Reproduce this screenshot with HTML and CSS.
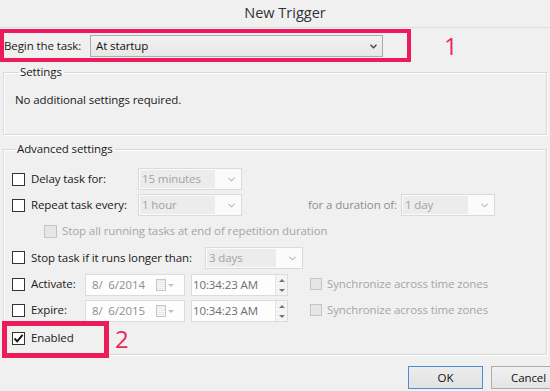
FILE: index.html
```html
<!DOCTYPE html>
<html>
<head>
    <meta charset="UTF-8">
    <title>New Trigger</title>
    <link rel="stylesheet" href="styles.css">
</head>
<body>
<div class="dialog">
    <div class="titlebar">New Trigger</div>

    <div class="begin-row">
        <div class="mark begin">
            <span class="begin-label">Begin the task:</span>
            <span class="combo main w293">
                <span class="combo-text">At startup</span>
                <svg class="chev" width="7" height="5" viewBox="0 0 7 5"><polyline points="0.5,0.8 3.5,3.8 6.5,0.8" fill="none" stroke="#444" stroke-width="1.3"/></svg>
            </span>
        </div>
        <span class="mark-num">1</span>
    </div>

    <!--设置区域-->
    <fieldset class="group settings">
        <legend>Settings</legend>
        <p class="note">No additional settings required.</p>
    </fieldset>

    <!--高级设置-->
    <fieldset class="group advanced">
        <legend>Advanced settings</legend>

        <div class="row">
            <label class="check w126"><span class="box"></span>Delay task for:</label>
            <span class="combo dis w104">
                <span class="combo-text">15 minutes</span>
                <svg class="chev" width="7" height="5" viewBox="0 0 7 5"><polyline points="0.5,0.8 3.5,3.8 6.5,0.8" fill="none" stroke="#b8b8b8" stroke-width="1.1"/></svg>
            </span>
        </div>

        <div class="row">
            <label class="check w126"><span class="box"></span>Repeat task every:</label>
            <span class="combo dis w104">
                <span class="combo-text">1 hour</span>
                <svg class="chev" width="7" height="5" viewBox="0 0 7 5"><polyline points="0.5,0.8 3.5,3.8 6.5,0.8" fill="none" stroke="#b8b8b8" stroke-width="1.1"/></svg>
            </span>
            <span class="duration-label">for a duration of:</span>
            <span class="combo dis w94">
                <span class="combo-text">1 day</span>
                <svg class="chev" width="7" height="5" viewBox="0 0 7 5"><polyline points="0.5,0.8 3.5,3.8 6.5,0.8" fill="none" stroke="#b8b8b8" stroke-width="1.1"/></svg>
            </span>
        </div>

        <div class="row sub">
            <label class="check disabled"><span class="box"></span>Stop all running tasks at end of repetition duration</label>
        </div>

        <div class="row tall">
            <label class="check w193"><span class="box"></span>Stop task if it runs longer than:</label>
            <span class="combo dis w98">
                <span class="combo-text">3 days</span>
                <svg class="chev" width="7" height="5" viewBox="0 0 7 5"><polyline points="0.5,0.8 3.5,3.8 6.5,0.8" fill="none" stroke="#b8b8b8" stroke-width="1.1"/></svg>
            </span>
        </div>

        <div class="row">
            <label class="check w73"><span class="box"></span>Activate:</label>
            <span class="date">
                <span class="date-text">8/&nbsp; 6/2014</span>
                <span class="cal"><span class="cal-page"></span><span class="cal-arrow"></span></span>
            </span>
            <span class="time">
                <span class="time-text">10:34:23 AM</span>
                <span class="spin"><span class="up"></span><span class="down"></span></span>
            </span>
            <label class="check disabled sync"><span class="box"></span>Synchronize across time zones</label>
        </div>

        <div class="row">
            <label class="check w73"><span class="box"></span>Expire:</label>
            <span class="date">
                <span class="date-text">8/&nbsp; 6/2015</span>
                <span class="cal"><span class="cal-page"></span><span class="cal-arrow"></span></span>
            </span>
            <span class="time">
                <span class="time-text">10:34:23 AM</span>
                <span class="spin"><span class="up"></span><span class="down"></span></span>
            </span>
            <label class="check disabled sync"><span class="box"></span>Synchronize across time zones</label>
        </div>

        <div class="row enabled-row">
            <div class="mark enabled">
                <label class="check"><span class="box on">
                    <svg width="11" height="11" viewBox="0 0 11 11"><polyline points="1.5,5.5 4.2,8.4 9.6,1.8" fill="none" stroke="#111" stroke-width="1.9"/></svg>
                </span>Enabled</label>
            </div>
            <span class="mark-num">2</span>
        </div>
    </fieldset>

    <div class="buttons">
        <a href="javascript:;" class="btn btn-ok">OK</a>
        <a href="javascript:;" class="btn">Cancel</a>
    </div>
</div>
</body>
</html>
```

FILE: styles.css
```css
body, div, p, fieldset, legend, span, label, a {
    margin: 0;
    padding: 0;
}

html, body {
    height: 100%;
}

body {
    background: #f0f0f0;
    overflow: hidden;
    font: 11.5px/16px "Open Sans", "Noto Sans", sans-serif;
    letter-spacing: -0.1px;
    color: #1a1a1a;
}

.dialog {
    width: 550px;
    height: 391px;
    overflow: hidden;
}

/*标题栏*/
.titlebar {
    height: 27px;
    padding-left: 20px;
    line-height: 26px;
    text-align: center;
    font-size: 14.5px;
    letter-spacing: 0;
    color: #333;
    border-bottom: 1px solid #dedede;
}

/*红色标注框*/
.mark {
    display: flex;
    align-items: center;
    box-sizing: border-box;
    border: 4px solid #ec1c5c;
}

.mark-num {
    font-size: 24px;
    line-height: 28px;
    letter-spacing: 0;
    color: #e8285f;
}

.begin-row {
    display: flex;
    align-items: center;
    margin-top: 1px;
}

.begin {
    width: 411px;
    height: 33px;
}

.begin-label {
    width: 86px;
}

.begin-row .mark-num {
    margin-left: 33px;
}

/*下拉框*/
.combo {
    display: flex;
    align-items: center;
    box-sizing: border-box;
    height: 22px;
    border: 1px solid #dadada;
    background: #fbfbfb;
}

.combo .combo-text {
    flex: 1;
    height: 18px;
    line-height: 18px;
    margin-left: 1px;
    padding-left: 2px;
    background: #ececec;
    color: #a3a3a3;
}

.combo .chev {
    margin: 1px 6px 0 13px;
}

.combo.main {
    border-color: #acacac;
    background: linear-gradient(#f3f3f3, #e6e6e6);
}

.combo.main .combo-text {
    background: none;
    color: #111;
    padding-left: 4px;
}

.combo.main .chev {
    margin: 1px 5px 0 0;
}

.w293 { width: 293px; }
.w104 { width: 104px; }
.w98 { width: 98px; }
.w94 { width: 94px; }

/*分组框*/
.group {
    margin: 0 3px;
    border: 1px solid #d9d9d9;
    box-shadow: inset 1px 1px 0 #fff, 1px 1px 0 #fff;
}

.group legend {
    margin-left: 4px;
    padding: 0 2px 0 1px;
    line-height: 16px;
}

.settings {
    margin-top: 2px;
    padding: 12px 0 26px 11px;
}

.advanced {
    margin-top: 6px;
    padding: 9px 0 0 8px;
}

/*复选框*/
.check {
    display: flex;
    align-items: center;
}

.check .box {
    display: flex;
    align-items: center;
    justify-content: center;
    box-sizing: border-box;
    width: 13px;
    height: 13px;
    margin-right: 6px;
    border: 1px solid #333;
    background: #fff;
}

.check.disabled {
    color: #a6a6a6;
}

.check.disabled .box {
    border-color: #c4c4c4;
    background: #e6e6e6;
    margin-right: 5px;
}

.w126 { width: 126px; }
.w193 { width: 193px; }
.w73 { width: 73px; }

.row {
    display: flex;
    align-items: center;
    height: 26px;
}

.row.tall {
    height: 27px;
}

.row.sub {
    padding-left: 32px;
}

.duration-label {
    width: 155px;
    text-align: right;
    margin-right: 4px;
    color: #8e8e8e;
}

/*日期时间*/
.date, .time {
    display: flex;
    align-items: center;
    box-sizing: border-box;
    height: 22px;
    border: 1px solid #dcdcdc;
    background: #fdfdfd;
}

.date {
    width: 100px;
    margin-top: 2px;
}

.date-text {
    flex: 1;
    padding-left: 6px;
    color: #8f8f8f;
}

.cal {
    display: flex;
    align-items: center;
    margin-right: 10px;
}

.cal-page {
    width: 8px;
    height: 10px;
    border: 1px solid #c8c8c8;
    background: repeating-linear-gradient(#e8e8e8 0, #e8e8e8 1px, #f8f8f8 1px, #f8f8f8 2px);
}

.cal-arrow {
    margin-left: 2px;
    border-left: 3px solid transparent;
    border-right: 3px solid transparent;
    border-top: 3px solid #c0c0c0;
}

.time {
    width: 97px;
    margin: 2px 0 0 6px;
}

.time-text {
    flex: 1;
    padding-left: 1px;
    color: #6e6e6e;
}

.spin {
    display: flex;
    flex-direction: column;
    align-items: center;
    justify-content: space-around;
    box-sizing: border-box;
    width: 12px;
    height: 20px;
    border-left: 1px solid #e4e4e4;
    background: #f4f4f4;
}

.spin .up {
    border-left: 3px solid transparent;
    border-right: 3px solid transparent;
    border-bottom: 3px solid #777;
}

.spin .down {
    border-left: 3px solid transparent;
    border-right: 3px solid transparent;
    border-top: 3px solid #777;
}

.sync {
    margin-left: 22px;
}

.sync .box {
    width: 12px;
    height: 12px;
    margin-right: 8px;
}

/*启用*/
.enabled-row {
    height: 37px;
    margin: -2px 0 -4px -10px;
}

.enabled {
    align-items: flex-start;
    width: 107px;
    height: 37px;
    border-width: 5px;
    padding: 4px 0 0 5px;
}

.enabled-row .mark-num {
    margin: -2px 0 0 6px;
}

/*按钮*/
.buttons {
    display: flex;
    gap: 8px;
    padding: 11px 0 0 408px;
}

.btn {
    flex: none;
    display: block;
    box-sizing: border-box;
    width: 75px;
    height: 23px;
    line-height: 21px;
    text-align: center;
    text-decoration: none;
    color: #111;
    border: 1px solid #acacac;
    background: linear-gradient(#f0f0f0, #e5e5e5);
}

.btn-ok {
    border-color: #4a8fd6;
    background: linear-gradient(#ececec, #e2e2e2);
}
```
